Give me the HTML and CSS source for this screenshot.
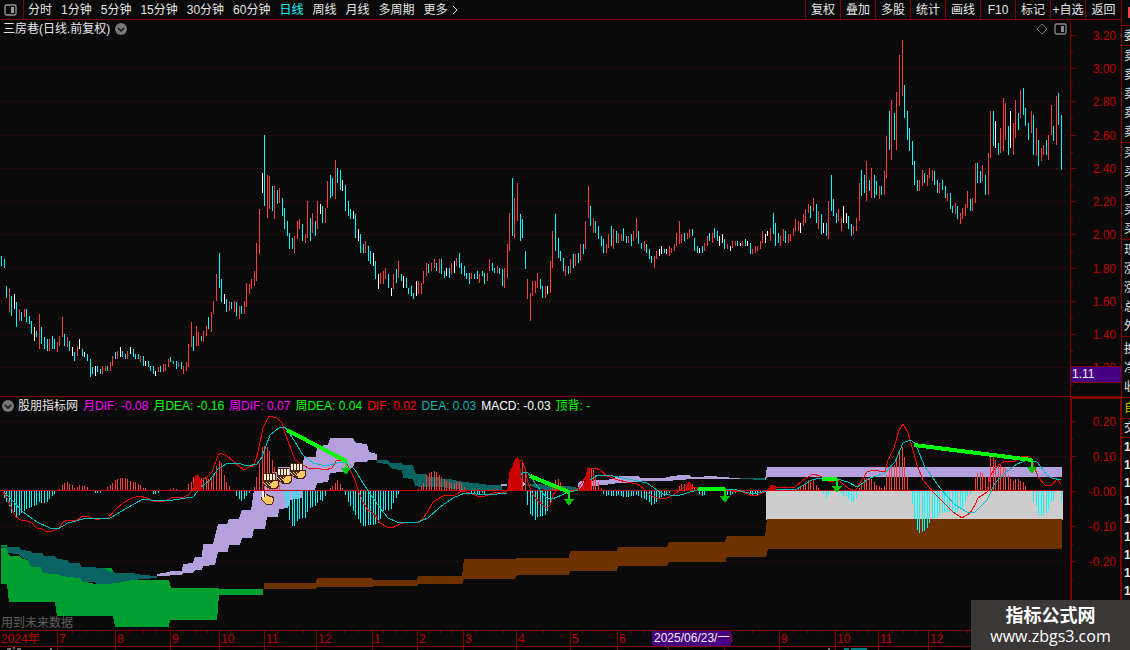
FILE: index.html
```html
<!DOCTYPE html>
<html lang="zh-CN">
<head>
<meta charset="utf-8">
<title>三房巷 日线</title>
<link rel="stylesheet" href="styles.css">
</head>
<body>
<div class="app">
  <div class="main">
    <nav class="toolbar">
      <button class="panel-toggle" aria-label="侧栏"><svg width="13" height="12" viewBox="0 0 13 12"><rect x="1" y="1" width="11" height="10" rx="1.5" fill="none" stroke="#999" stroke-width="1.3"/><rect x="7" y="3" width="3" height="6" fill="#999"/></svg></button>
      <div class="periods">
        <button>分时</button><button>1分钟</button><button>5分钟</button><button>15分钟</button><button>30分钟</button><button>60分钟</button><button class="active">日线</button><button>周线</button><button>月线</button><button>多周期</button><button class="more">更多<svg width="6" height="10" viewBox="0 0 6 10"><path d="M1 1l4 4-4 4" fill="none" stroke="#ddd"/></svg></button>
      </div>
      <div class="tools">
        <button>复权</button><button>叠加</button><button>多股</button><button>统计</button><button>画线</button><button>F10</button><button>标记</button><button>+自选</button><button>返回</button>
      </div>
    </nav>
    <section class="pane price">
      <div class="plot">
        <header class="caption">
          <span>三房巷(日线.前复权)</span>
          <svg width="12" height="12" viewBox="0 0 12 12"><circle cx="6" cy="6" r="6" fill="#777"/><path d="M3 5l3 3 3-3" fill="none" stroke="#111" stroke-width="1.5"/></svg>
          <span class="caption-tools">
            <svg width="12" height="12" viewBox="0 0 12 12"><path d="M6 1l5 5-5 5-5-5z" fill="none" stroke="#777"/></svg>
            <svg width="13" height="12" viewBox="0 0 13 12"><rect x="1" y="1" width="11" height="10" rx="1.5" fill="none" stroke="#8a8a8a" stroke-width="1.3"/><rect x="7" y="3" width="3" height="6" fill="#8a8a8a"/></svg>
          </span>
        </header>
        <svg class="chart" viewBox="0 38 1070 358" id="price"></svg>
      </div>
      <svg class="scale" viewBox="1070 20 51 376" id="priceScale"></svg>
    </section>
    <section class="pane indicator">
      <div class="plot">
        <header class="caption legend">
          <svg width="12" height="12" viewBox="0 0 12 12"><circle cx="6" cy="6" r="6" fill="#777"/><path d="M3 5l3 3 3-3" fill="none" stroke="#111" stroke-width="1.5"/></svg>
          <span>股朋指标网</span><span class="magenta">月DIF: -0.08</span><span class="green">月DEA: -0.16</span><span class="magenta">周DIF: 0.07</span><span class="green">周DEA: 0.04</span><span class="red">DIF: 0.02</span><span class="teal">DEA: 0.03</span><span class="bright">MACD: -0.03</span><span class="green">顶背: -</span>
        </header>
        <svg class="chart" viewBox="0 414 1070 216" id="macd"></svg>
      </div>
      <svg class="scale" viewBox="1070 397 51 233" id="macdScale"></svg>
    </section>
    <div class="dates"><svg class="chart" viewBox="0 630 1070 20" id="dates"></svg></div>
  </div>
  <aside class="side">
    <div class="group quote"><i></i></div>
    <div class="group">委</div>
    <div class="group"><span>卖</span><span>卖</span><span>卖</span><span>卖</span><span>卖</span></div>
    <div class="group"><span>买</span><span>买</span><span>买</span><span>买</span><span>买</span></div>
    <div class="group"><span>现</span><span>涨</span><span>涨</span><span>总</span><span>外</span></div>
    <div class="group three"><span>换</span><span>净</span><span>收</span></div>
    <div class="group tab">自</div>
    <div class="group deal">交</div>
    <div class="ticks"><span>1</span><span>1</span><span>1</span><span>1</span><span>1</span><span>1</span><span>1</span><span>1</span><span>1</span></div>
  </aside>
  <div class="brand"><strong>指标公式网</strong><span>www.zbgs3.com</span></div>
</div>
<script src="chart.js"></script>
</body>
</html>
```
FILE: styles.css
```css
* { box-sizing: border-box; }
body {
  margin: 0;
  background: #0a0a0a;
  color: #e6e6e6;
  font: 12px/18px "Liberation Sans", "Noto Sans CJK SC", sans-serif;
}
button {
  margin: 0;
  padding: 0;
  border: 0;
  background: none;
  color: inherit;
  font: inherit;
  white-space: nowrap;
}
svg { display: block; }
svg text { font-family: "Liberation Sans", "Noto Sans CJK SC", sans-serif; }
.app {
  position: relative;
  display: grid;
  grid-template-columns: minmax(0, 1fr) 9px;
  overflow: hidden;
}
.toolbar {
  display: flex;
  height: 20px;
  border-bottom: 1px solid #800000;
}
.panel-toggle {
  padding: 0 6px 0 4px;
  border-right: 1px solid #800000;
}
.periods {
  display: flex;
  flex: 1;
  gap: 9px;
  padding-left: 4px;
}
.periods .active { color: #00ffff; }
.more { display: flex; align-items: center; gap: 4px; }
.tools { display: flex; }
.tools button {
  width: 35px;
  border-left: 1px solid #800000;
}
.tools button:last-child { width: 36px; }
.pane {
  display: grid;
  grid-template-columns: minmax(0, 1fr) 51px;
}
.indicator { border-top: 1px solid #800000; }
.caption {
  display: flex;
  align-items: center;
  gap: 5px;
  height: 18px;
  padding: 0 3px;
  white-space: nowrap;
}
.caption-tools {
  display: flex;
  gap: 6px;
  margin-left: auto;
}
.legend { height: 17px; padding: 0 2px; gap: 5px; }
.legend svg { margin-right: -1px; }
.magenta { color: #ff00ff; }
.green { color: #00ff00; }
.red { color: #ff0000; }
.teal { color: #00b4b4; }
.bright { color: #ffffff; }
.chart { width: 100%; height: auto; }
.scale { width: 100%; }
.dates { padding-right: 51px; }
.side {
  overflow: hidden;
  padding-left: 2px;
  border-left: 1px solid #800000;
  white-space: nowrap;
}
.group {
  margin-left: -2px;
  padding: 1px 0 0 2px;
  border-bottom: 1px solid #800000;
  line-height: 18px;
}
.group span { display: block; line-height: 19px; }
.quote { height: 26px; padding: 7px 0 0 6px; }
.quote i { display: block; height: 11px; background: #ff4040; }
.three { padding-top: 3px; }
.tab { line-height: 19px; color: #c8c800; }
.deal { line-height: 17px; }
.ticks span { display: block; font-weight: bold; }
.brand {
  position: absolute;
  right: 0;
  bottom: 0;
  display: flex;
  flex-direction: column;
  align-items: center;
  width: 159px;
  height: 50px;
  padding-top: 6px;
  background: #3c3737;
  color: #ffffff;
}
.brand strong {
  font-size: 18px;
  line-height: 20px;
}
.brand span {
  font-family: "Open Sans", "Noto Sans", sans-serif;
  font-size: 16px;
  line-height: 20px;
}
```
FILE: chart.js
```js
const byId = id => document.getElementById(id);
const UP = '#ff3c3c', DOWN = '#00ffff', FLAT = '#ffffff', LINE = '#800000';

// Daily bars: x, high, low, kind (r = up, c = down, w = unchanged)
const bars = `1 256 266c,4 259 268c,6 286 298c,9 288 312r,11 296 316c,14 294 309w,16 302 327c,19 309 321r,21 312 321c,24 309 317r,26 309 322c,29 316 324c,31 321 334c,34 327 341w,36 331 337c,39 314 349r,41 327 344c,44 337 349c,47 339 351c,49 339 351r,52 336 349c,54 339 349c,57 342 352r,59 336 346r,62 317 337r,64 334 346c,67 337 347r,69 341 351c,72 347 356w,74 352 361c,77 346 356r,79 339 349w,82 349 356c,84 352 357w,87 354 361c,90 359 377c,92 367 374c,95 366 376w,97 366 372c,100 369 374c,102 366 374r,105 366 371r,107 366 371c,110 362 371r,112 356 366r,115 352 359c,117 351 359r,120 347 357w,122 351 357c,125 354 359c,127 351 359r,130 347 354w,133 349 357c,135 354 359c,138 354 359c,140 356 362r,143 356 366c,145 361 366w,148 361 367c,150 366 371c,153 366 374c,155 371 376w,158 367 372r,160 366 372c,163 364 372r,165 364 371r,168 359 367r,170 357 362c,173 361 364c,176 361 369c,178 362 367r,181 362 369c,183 366 374r,186 362 371r,188 344 367r,191 322 347r,193 336 351c,196 326 346r,198 332 346r,201 336 341c,203 331 342r,206 326 336r,208 317 329c,211 312 332r,213 301 314r,216 274 301r,219 253 288c,221 279 302c,224 294 304w,226 299 312c,229 302 311r,231 302 309c,234 301 312r,236 302 316c,239 306 319r,241 306 314c,244 301 314r,246 283 307r,249 284 294r,251 279 289r,254 271 286r,256 243 281r,259 209 254r,262 173 193w,264 135 206c,267 175 218r,269 176 209r,272 186 211c,274 186 219r,277 190 204c,279 188 203r,282 198 216c,284 208 229c,287 221 236c,289 233 249c,292 238 249c,294 236 253r,297 221 239r,299 219 229r,302 224 241c,305 234 243r,307 201 238r,310 218 241c,312 213 233r,315 221 236c,317 201 229r,320 204 214w,322 206 223c,325 208 223r,327 181 208r,330 175 198c,332 178 196c,335 160 199r,337 168 183c,340 170 190c,342 180 191w,345 185 211c,348 201 216c,350 209 219c,353 211 219w,355 214 238c,358 229 241w,360 234 253c,363 244 253c,365 241 253r,368 246 261c,370 251 264c,373 253 266w,375 261 279c,378 274 289w,380 273 284r,383 271 284r,385 268 279r,388 274 288c,391 288 296w,393 274 289r,396 269 283c,398 261 278r,401 274 281c,403 276 288w,406 278 288c,408 288 294c,411 286 296c,413 293 299c,416 281 296w,418 281 294r,421 283 294r,423 271 284r,426 263 276r,428 264 273c,431 263 271r,434 259 268r,436 263 271c,439 259 273r,441 259 274c,444 271 278c,446 268 276w,449 268 278c,451 263 274r,454 261 273w,456 258 266r,459 253 268c,461 263 274c,464 266 276c,466 273 279c,469 273 284c,471 273 279r,474 274 279c,477 271 279c,479 274 283r,482 271 276c,484 273 284c,487 273 281r,489 259 271r,492 263 271c,494 268 273c,497 266 273r,499 268 274c,502 269 286c,504 268 288r,507 244 278r,509 213 251r,512 178 236c,514 198 238r,517 183 221r,520 214 241c,522 219 238c,525 251 269c,527 279 299r,530 293 321r,532 281 296r,535 281 293r,537 273 288r,540 279 289c,542 286 298c,545 286 298r,547 286 294w,550 261 293r,552 231 268r,555 214 251c,558 238 258c,560 251 261c,563 258 271c,565 266 276r,568 266 274c,570 259 273r,573 254 268c,575 254 266r,578 253 263c,580 244 261r,583 244 254c,585 221 249r,588 186 218r,590 206 226c,593 218 233r,595 221 233c,598 226 239c,601 236 246c,603 239 253c,606 244 253r,608 234 248r,611 226 246c,613 229 249r,616 231 243c,618 233 243r,621 234 241r,623 228 241c,626 236 243c,628 236 243r,631 234 246c,633 231 241r,636 218 238r,638 231 244c,641 243 249c,644 241 251r,646 244 253c,649 249 259c,651 256 263c,654 256 268r,656 251 259r,659 249 256w,661 246 254w,664 249 253c,666 249 254w,669 246 256r,671 248 253r,674 244 251r,676 233 246r,679 221 244r,681 234 243r,684 233 241c,687 233 239r,689 229 238r,692 229 236c,694 238 251c,697 246 253c,699 248 253w,702 246 253c,704 243 251r,707 236 246r,709 233 241c,712 233 243r,714 228 238c,717 231 241c,719 236 246w,722 234 243w,724 239 249c,727 244 249r,730 246 251w,732 241 248r,735 241 246r,737 241 246c,740 243 246w,742 241 246r,745 239 246c,747 241 246w,750 243 254c,752 249 254r,755 246 253r,757 246 251r,760 241 249r,762 231 243r,765 234 243w,767 231 236w,770 228 241r,773 213 234c,775 223 246c,778 233 243c,780 236 246r,783 229 241r,785 231 243c,788 234 243r,790 234 241r,793 228 236r,795 219 231r,798 221 231r,800 223 233w,803 214 226r,805 209 223r,808 204 213r,810 206 218c,813 198 211r,816 204 223c,818 211 229r,821 214 234c,823 223 233w,826 223 236c,828 201 239r,831 175 211c,833 199 216c,836 213 223c,838 209 221r,841 218 231r,843 206 223w,846 213 223w,848 216 229c,851 224 236c,853 226 234r,856 218 231r,859 183 221r,861 170 196c,864 175 193c,866 161 201r,869 180 191c,871 168 198r,874 175 198c,876 181 195c,879 186 199r,881 186 195c,884 171 195r,886 136 178r,889 111 150c,891 100 160r,894 113 140c,896 92 150r,899 55 106r,902 40 96r,904 85 118c,907 111 140c,909 128 151c,912 141 165c,914 161 185c,917 180 191c,919 180 191r,922 170 186r,924 173 183c,927 175 186r,929 168 178r,932 170 181r,934 171 185c,937 180 193c,939 183 193r,942 180 190c,945 186 198c,947 193 201r,950 193 209c,952 206 213c,955 203 214r,957 206 219c,960 213 224r,962 208 219r,965 204 216r,967 191 208r,970 199 211c,972 198 211r,975 163 203r,977 163 183c,980 171 183c,982 165 181r,985 175 195c,988 153 195r,990 111 158r,993 111 146c,995 121 148w,998 143 155c,1000 128 153r,1003 98 151r,1005 103 140r,1008 126 155c,1010 111 148w,1013 123 155r,1015 100 138r,1018 113 130c,1020 90 118r,1023 88 115c,1025 108 126c,1028 123 140c,1031 111 133r,1033 115 155c,1036 128 156r,1038 140 166c,1041 148 161r,1043 145 155r,1046 140 155c,1048 135 160r,1051 105 135r,1053 126 141c,1056 96 145r,1058 93 125c,1061 115 170c`;

// MACD histogram: x:end, measured from the zero line
const hist = '4:498 6:502 9:506 11:513 14:512 16:517 19:515 21:513 24:511 26:509 29:508 31:507 34:506 36:505 39:502 41:503 44:503 47:502 49:499 52:496 54:494 59:489 62:485 64:483 67:482 69:484 72:485 74:488 77:487 79:485 82:486 84:486 87:487 90:490 95:493 97:493 100:493 105:490 107:487 110:485 112:483 115:480 117:479 120:478 122:478 125:478 127:479 130:481 133:482 135:482 138:484 140:485 143:488 145:488 153:494 155:494 158:493 168:490 170:489 173:488 176:489 178:490 181:490 183:490 186:490 188:484 191:482 193:477 201:478 203:478 206:478 208:479 211:477 213:473 216:466 219:461 221:463 224:475 226:482 229:486 236:496 239:499 241:501 244:499 246:496 249:493 254:487 256:477 259:463 262:447 264:446 267:447 269:451 272:460 274:467 277:475 279:485 284:500 287:508 289:520 292:526 294:526 297:521 299:519 302:518 305:518 307:512 310:508 312:507 315:506 317:503 320:500 322:501 325:496 330:488 332:486 335:483 337:480 340:484 342:488 345:495 348:502 350:506 353:511 355:515 358:519 360:523 363:526 365:526 368:525 370:525 373:525 375:524 378:523 380:519 383:511 385:510 388:510 391:509 393:503 396:498 398:494 418:489 421:486 423:483 426:475 429:473 431:472 434:471 436:472 439:475 441:477 444:479 446:481 449:482 451:483 454:483 456:482 459:482 461:484 464:487 466:490 471:494 474:494 477:495 479:494 482:493 484:494 489:489 492:489 494:490 497:489 522:463 525:473 527:505 530:514 532:516 535:520 537:517 540:516 542:516 545:515 547:511 550:503 552:485 555:480 558:479 560:482 563:486 565:490 591:469 593:470 595:475 598:482 601:488 603:494 606:496 608:495 611:496 613:496 616:496 618:495 621:496 623:497 626:497 628:497 631:496 633:496 636:495 638:496 641:498 644:499 646:500 649:502 651:505 654:504 656:502 659:499 661:497 664:496 666:494 669:493 676:490 679:486 681:484 684:484 692:484 694:487 699:494 702:496 704:495 724:494 727:495 730:495 732:494 735:493 750:494 752:495 755:494 757:495 760:494 795:490 798:488 800:487 803:486 805:484 808:480 810:482 813:480 816:485 818:488 823:494 826:498 828:495 841:494 843:496 846:497 848:499 851:502 853:502 856:499 859:488 861:484 864:478 866:478 869:478 871:479 874:482 876:485 879:486 881:488 884:486 886:475 889:469 891:465 894:465 896:457 899:452 902:447 904:457 907:477 909:490 912:504 914:519 917:530 919:533 922:532 924:531 927:528 929:523 932:518 934:518 937:518 939:515 942:513 944:512 947:512 949:512 952:513 955:514 957:512 960:510 962:508 965:502 967:496 970:494 975:478 977:473 980:472 982:473 985:477 988:477 990:457 993:457 995:460 998:464 1000:465 1003:467 1005:468 1008:475 1010:479 1013:481 1015:479 1018:479 1020:481 1023:482 1025:486 1033:502 1036:506 1038:515 1041:516 1043:514 1046:513 1048:509 1051:502 1053:501 1061:501';

const bands = [
  ['#00a030', '1,545 7,545 8,554 10,556 20,556 22,559 29,560 31,567 41,567 44,573 68,575 80,577 82,581 95,584 105,584 131,580 169,580 171,588 218,588 219,589 263,589 263,595 219,595 217,620 170,620 169,627 115,627 113,616 57,616 55,602 9,602 7,584 1,584'],
  ['#00a030', '93,568 112,568 113,571 113,575 93,572'],
  ['#0a6464', '1,546 8,547 20,547 21,550 31,551 32,553 43,553 44,556 55,556 57,559 68,560 69,563 80,563 81,567 93,567 106,569 107,571 118,573 132,573 143,575 157,576 157,578 143,579 132,580 118,583 106,584 96,584 95,582 82,582 80,578 68,577 55,574 43,573 41,567 31,567 28,560 22,558 18,554 8,553 7,548 1,548'],
  ['#b4a0dc', '157,574 169,572 171,571 182,571 183,564 193,563 195,557 202,557 203,544 213,544 218,524 227,524 229,519 239,519 242,510 251,510 254,490 264,490 266,473 277,472 278,467 290,467 292,463 303,463 304,457 316,457 317,446 328,445 330,438 353,438 356,443 367,444 369,452 377,454 377,460 368,460 367,462 355,462 353,467 342,472 330,473 328,482 317,483 315,490 303,491 302,498 290,500 288,508 279,509 278,517 267,517 265,529 254,529 252,538 242,538 240,545 229,545 228,552 218,552 215,565 203,566 202,570 195,570 193,573 183,573 182,575 157,576'],
  ['#0a6464', '377,460 388,460 390,463 402,463 403,465 413,465 416,474 427,474 428,477 439,477 440,479 450,479 463,482 475,483 490,485 502,485 502,490 463,490 440,487 420,487 415,486 413,479 403,478 402,470 392,469 388,464 377,463'],
  ['#b4a0dc', '500,485 502,484 507,484 507,486 502,486'],
  ['#b4a0dc', '520,479 525,484 524,486 520,484'],
  ['#0a6464', '525,484 537,484 556,486 568,486 578,488 578,490 568,490 548,490 540,489 533,487'],
  ['#b4a0dc', '578,483 581,481 607,480 617,477 620,476 638,476 641,478 665,478 667,477 680,475 689,475 692,477 715,476 718,477 740,478 740,479 717,479 692,479 680,480 665,481 640,481 637,482 618,483 605,485 590,486 578,489'],
  ['#0a6464', '740,478 765,478 765,480 740,479'],
  ['#b4a0dc', '765,480 767,467 1062,467 1062,477 767,477 766,480'],
  ['#cdcdcd', '766,491 1063,491 1063,520 766,520'],
  ['#6e3200', '264,583 316,583 317,578 372,578 373,580 417,580 418,576 462,576 464,559 516,559 516,558 569,558 570,551 617,551 618,547 667,547 669,542 725,542 727,536 765,536 767,519 1062,519 1062,549 768,549 766,557 727,557 725,562 669,562 667,566 618,566 617,571 570,571 569,575 517,575 515,579 464,579 462,584 418,584 417,586 373,586 372,587 317,587 316,589 264,589']
];
const peaks = ['192,491 194,480 196,475 199,475 201,482 202,491', '507,491 509,475 510,469 512,468 514,461 516,458 518,457 520,463 522,483 522,491', '577,491 582,487 585,480 587,470 588,467 590,469 591,491', '685,491 687,485 688,482 690,482 692,486 693,491', '765,491 768,488 770,486 771,484 773,487 776,488 777,491'];
const dif = '3,492 7,498 11,507 16,517 21,520 27,521 32,523 37,528 42,529 47,532 52,531 55,530 59,528 63,522 68,520 77,520 83,516 89,517 95,519 100,519 108,518 115,510 123,503 132,498 140,496 147,498 153,501 162,502 167,500 173,497 182,498 188,495 193,490 200,482 207,477 212,472 217,458 220,453 227,456 233,461 240,467 244,470 249,467 254,466 258,452 263,428 269,416 277,418 282,423 285,433 292,452 295,460 300,463 308,468 317,468 325,470 332,468 336,461 345,460 350,470 355,480 358,490 363,502 368,510 375,515 380,523 387,527 392,528 400,524 407,522 420,522 427,513 433,502 443,496 455,495 462,491 470,493 477,496 485,496 493,493 505,492 507,491M519,460 522,461 525,468 528,483 532,493 538,501 547,508 550,505 553,495 557,489 562,489 568,492 578,489 585,478 590,469 595,468 600,470 607,476 618,480 627,482 637,484 643,488 650,495 657,498 667,498 673,495 682,489 688,483 693,487 700,489 713,490 725,490 732,491 743,492 753,496 758,495 767,490 772,485 778,488 795,487 803,480 813,474 820,476 830,482 838,480 848,488 855,491 860,483 867,472 873,470 885,472 888,460 894,448 899,430 903,424 908,433 913,450 917,465 923,480 933,492 943,502 953,512 962,518 970,513 975,505 978,498 987,492 990,477 995,468 1005,461 1013,462 1023,456 1030,457 1033,463 1038,477 1045,485 1052,485 1057,479 1061,484';
const dea = '4,492 13,501 23,512 37,522 50,528 58,529 68,523 87,518 110,518 127,508 143,499 157,501 173,500 193,497 200,488 210,480 218,469 228,463 237,463 248,466 257,464 262,457 270,435 280,427 285,427 292,437 303,455 313,463 327,466 340,462 348,463 355,470 363,483 373,498 380,508 388,518 397,522 418,522 428,518 440,507 453,498 465,493 487,495 507,493M520,477 523,472 528,473 533,480 540,490 547,498 552,499 562,495 568,492 580,490 590,480 598,475 613,476 633,480 647,483 657,490 663,494 677,496 687,493 697,490 723,489 737,490 753,494 767,491 777,489 797,489 812,480 820,478 837,479 848,482 857,487 870,478 885,473 895,462 903,443 910,440 915,443 925,467 940,488 955,505 967,512 975,512 987,500 995,483 1005,473 1017,464 1027,460 1037,462 1047,475 1052,478 1061,480';

const gridLines = rows => rows.map(y => `<path d="M1 ${y}.5H1069" stroke="#700a0a" stroke-dasharray="1 3"/>`).join('');
const text = (x, y, label, fill = '#c00000', size = 12, more = '') =>
  `<text x="${x}" y="${y}" fill="${fill}" font-size="${size}" ${more}>${label}</text>`;

// Price pane
const paths = { r: '', c: '', w: '' };
bars.split(',').forEach(b => {
  const kind = b.slice(-1);
  const [x, top, bottom] = b.slice(0, -1).split(' ').map(Number);
  paths[kind] += `M${x} ${top}h1V${bottom}h-1z`;
});
byId('price').innerHTML = `<g shape-rendering="crispEdges">${gridLines([68, 101, 135, 168, 201, 234, 268, 301, 334, 367])}
<path d="${paths.r}" fill="${UP}"/><path d="${paths.c}" fill="${DOWN}"/><path d="${paths.w}" fill="${FLAT}"/></g>`;

let scale = `<path d="M.5 20V396" transform="translate(1070)" stroke="${LINE}" shape-rendering="crispEdges"/>`;
[35, 68, 101, 135, 168, 201, 234, 268, 301, 334, 367].forEach((y, i) => {
  scale += `<path d="M1071 ${y}.5h5M1071 ${y + 17}.5h2" stroke="${LINE}" shape-rendering="crispEdges"/>`;
  scale += text(1116, y + 5, (3.2 - i * 0.2).toFixed(2), '#c00000', 12, 'text-anchor="end"');
});
scale += `<path d="M1071 366h50v16h-50z" fill="#480082"/><path d="M1071 366.5h50M1071 382.5h50" stroke="${LINE}"/>` + text(1072, 378, '1.11', '#f0f0f0');
byId('priceScale').innerHTML = scale;

// Indicator pane
let up = '', down = '';
hist.split(' ').forEach(h => {
  const [x, y] = h.split(':').map(Number);
  if (y < 491) up += `M${x} ${y}h1V491h-1z`; else down += `M${x} 491h1V${y}h-1z`;
});
const arrow = (x, y) => `<path d="M${x} ${y}v9" stroke="#00e600" stroke-width="2"/><path d="M${x - 5} ${y + 8}h10l-5 7z" fill="#00c800"/>`;
const hand = (x, y) => `<g transform="translate(${x} ${y})"><path d="M1 1h2v5h1V4h2v1h2v1h3v1h1v5l-1 2H5L1 10 0 7h1z" fill="#ffc864" stroke="#4a2408" stroke-width="1"/><path d="M1 1h2v7H1zM4 4h1v3H4z" fill="#fff2dc"/></g>`;
// Overlapping pointing hands: finger tips on top, crossed outlines below, the last palm visible
const fists = (x, y, w) => {
  let tips = '', cross = '';
  for (let k = 1; k < w; k += 3) tips += `M${k} 1h2v6h-2z`;
  for (let k = 0; k < w - 5; k += 3) cross += `M${k} 9h1v1h1v1h1v1h1v1h-1v-1h-1v-1h-1v-1h-1z`;
  return `<g transform="translate(${x} ${y})"><path d="M0 0h${w}v7h3v6l-3 3h-6L0 12z" fill="#4a2408"/><path d="${tips}" fill="#fff2dc"/><path d="${cross}" fill="#e6c8a0"/><path d="M${w - 6} 11l3-3h5v4l-3 3h-4z" fill="#ffc864"/></g>`;
};
const hands = fists(263, 473, 13) + fists(277, 468, 12) + fists(290, 463, 13) + hand(261, 490);
byId('macd').innerHTML = `<g shape-rendering="crispEdges">${gridLines([421, 456, 526, 561])}
${bands.map(([fill, pts]) => `<polygon fill="${fill}" points="${pts}"/>`).join('')}
<path d="${up}" fill="${UP}"/><path d="${down}" fill="${DOWN}"/>
<path d="M0 490.5H1062" stroke="#cd0000"/>
<path d="M${dif}" fill="none" stroke="#ff0000"/><path d="M${dea}" fill="none" stroke="#00bebe"/>
${peaks.map(p => `<polygon fill="#cd0000" points="${p}"/>`).join('')}
<path d="M287 430L346 461M530 476L569 492M698 489H725M822 479H837M914 445L1032 460" stroke="#00ff00" stroke-width="4" fill="none"/>
${arrow(346, 460)}${arrow(569, 491)}${arrow(725, 488)}${arrow(837, 478)}${arrow(1032, 459)}${hands}</g>
${text(1, 627, '用到未来数据', '#606060')}`;

let macd = `<path d="M1070 398h51v232M1071 398V630" fill="none" stroke="${LINE}" stroke-width="2" shape-rendering="crispEdges"/>`;
['0.20', '0.10', '-0.00', '-0.10', '-0.20'].forEach((label, i) => {
  const y = 421 + i * 35;
  macd += `<path d="M1072 ${y}.5h4M1072 ${y + 18}.5h1" stroke="${LINE}" shape-rendering="crispEdges"/>` + text(1116, y + 5, label, '#c00000', 12, 'text-anchor="end"');
});
byId('macdScale').innerHTML = macd;

// Date axis
const months = [[57, '7'], [115, '8'], [170, '9'], [219, '10'], [264, '11'], [316, '12'], [372, '1'], [417, '2'], [463, '3'], [516, '4'], [570, '5'], [617, '6'], [668, ''], [724, '8'], [779, '9'], [835, '10'], [878, '11'], [928, '12']];
let axis = 'M0 630.5H1070M0 646.5H1070', labels = text(1, 643, '2024年');
months.forEach(([x, label], i) => {
  const step = ((months[i + 1] || [980])[0] - x) / 4;
  axis += `M${x}.5 630V646M${x}.5 647v3`;
  for (let k = 1; k < 4; k++) axis += `M${Math.round(x + step * k)}.5 630v3`;
  if (label) labels += text(x + 2, 643, label);
});
byId('dates').innerHTML = `<path d="M0 647h1070v3H0z" fill="#000"/>${labels}<path d="${axis}" stroke="${LINE}" fill="none" shape-rendering="crispEdges"/>
<path d="M652 631h79v15h-79z" fill="#480082"/>${text(654, 642, '2025/06/23/一', '#f0f0f0')}
<path d="M7 649h4M13 648h2M17 649h4M50 649h2M828 649h2" stroke="#ddd"/><path d="M844 649h5M851 649h16" stroke="#00ffff"/>`;
```
